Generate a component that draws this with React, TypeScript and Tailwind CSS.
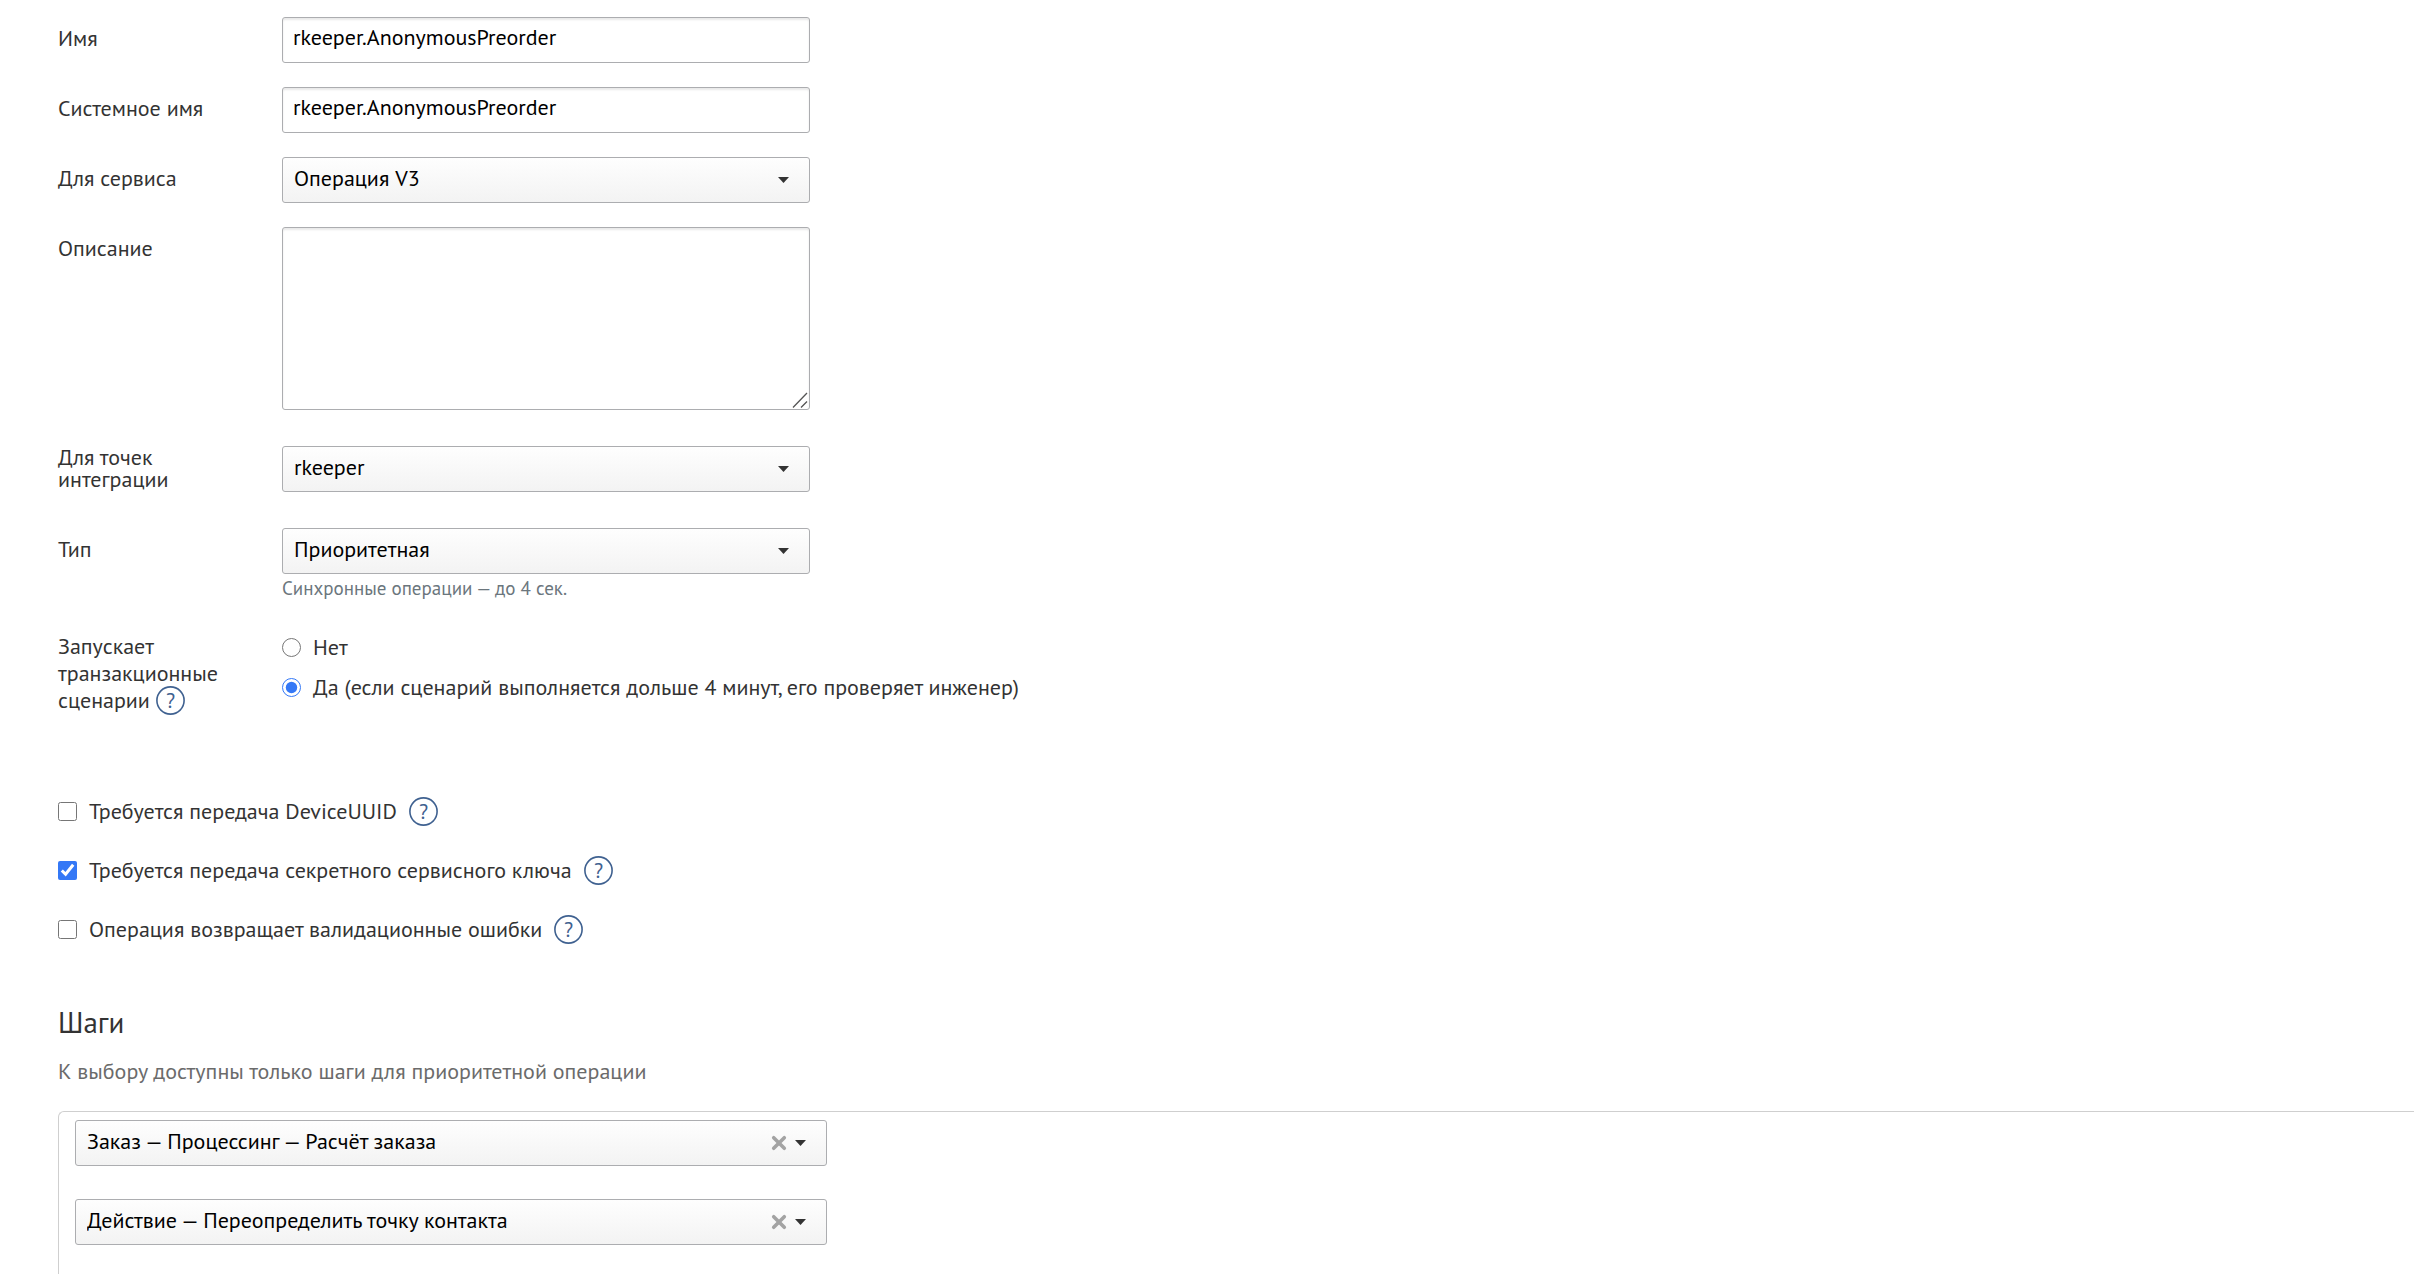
import { ReactNode, useState } from "react";

const fieldBorder = "border border-[#acadb0] rounded-[3px]";

function Row({ label, htmlFor, className = "", labelClass = "pt-[10px] leading-[22px]", children }: {
  label: ReactNode;
  htmlFor?: string;
  className?: string;
  labelClass?: string;
  children: ReactNode;
}) {
  return (
    <div className={`grid grid-cols-[224px_minmax(0,1fr)] ${className}`}>
      <label htmlFor={htmlFor} className={`pr-12 ${labelClass}`}>
        {label}
      </label>
      <div>{children}</div>
    </div>
  );
}

function TextInput({ id, defaultValue }: { id: string; defaultValue: string }) {
  return (
    <input
      id={id}
      type="text"
      defaultValue={defaultValue}
      className={`block h-[46px] w-full max-w-[528px] bg-white px-[10px] pb-[6px] text-black shadow-[inset_0_2px_2px_rgba(0,0,0,0.09)] outline-none ${fieldBorder}`}
    />
  );
}

function Select({ id, label, options, width = "max-w-[528px]", clearable = false }: {
  id: string;
  label?: string;
  options: string[];
  width?: string;
  clearable?: boolean;
}) {
  const [value, setValue] = useState(options[0]);

  return (
    <div className={`relative w-full ${width}`}>
      <select
        id={id}
        aria-label={label}
        value={value}
        onChange={(e) => setValue(e.target.value)}
        className={`block h-[46px] w-full appearance-none bg-linear-to-b from-[#fefefe] to-[#f3f3f3] pr-16 pb-1 pl-[11px] text-black outline-none ${fieldBorder}`}
      >
        {clearable && <option value=""></option>}
        {options.map((option) => (
          <option key={option}>{option}</option>
        ))}
      </select>
      <div className="pointer-events-none absolute inset-y-0 right-[21px] flex items-center gap-2">
        {clearable && (
          <button
            type="button"
            aria-label="Очистить"
            onClick={() => setValue("")}
            className="pointer-events-auto"
          >
            <svg width="16" height="16" viewBox="0 0 16 16" className="block">
              <path d="M2.7 2.7l10.6 10.6M13.3 2.7L2.7 13.3" stroke="#a3a3a3" strokeWidth="3.6" strokeLinecap="round" />
            </svg>
          </button>
        )}
        <svg width="11" height="6" viewBox="0 0 11 6">
          <path d="M0 0h11L5.5 6z" fill="#333" />
        </svg>
      </div>
    </div>
  );
}

function Help({ className = "" }: { className?: string }) {
  return (
    <button type="button" className={`size-[29px] shrink-0 ${className}`}>
      <svg width="29" height="29" viewBox="0 0 29 29" className="block">
        <circle cx="14.5" cy="14.5" r="13.6" fill="none" stroke="#3f6190" strokeWidth="1.6" />
        <text x="14.5" y="21.5" textAnchor="middle" fontSize="21" fill="#3f6190">
          ?
        </text>
      </svg>
    </button>
  );
}

function Radio({ label, defaultChecked }: { label: string; defaultChecked?: boolean }) {
  return (
    <label className="flex h-[30px] items-center gap-3">
      <input
        type="radio"
        name="transactional"
        defaultChecked={defaultChecked}
        className="size-[19px] shrink-0 accent-[#3478f6]"
      />
      {label}
    </label>
  );
}

const flags = [
  { id: "device-uuid", label: "Требуется передача DeviceUUID", checked: false },
  { id: "secret-key", label: "Требуется передача секретного сервисного ключа", checked: true },
  { id: "validation", label: "Операция возвращает валидационные ошибки", checked: false },
];

const steps = ["Заказ — Процессинг — Расчёт заказа", "Действие — Переопределить точку контакта"];

export default function App() {
  return (
    <form className="flex min-h-screen flex-col bg-white pt-[17px] pl-[58px] font-['PT_Sans','Noto_Sans',sans-serif] text-[22px] text-[#333]">
      <div className="space-y-6">
        <Row label="Имя" htmlFor="name">
          <TextInput id="name" defaultValue="rkeeper.AnonymousPreorder" />
        </Row>
        <Row label="Системное имя" htmlFor="system-name">
          <TextInput id="system-name" defaultValue="rkeeper.AnonymousPreorder" />
        </Row>
        <Row label="Для сервиса" htmlFor="service">
          <Select id="service" options={["Операция V3"]} />
        </Row>
        <Row label="Описание" htmlFor="description">
          <div className="relative w-full max-w-[528px]">
            <textarea
              id="description"
              className={`block h-[183px] w-full resize-none bg-white px-[10px] py-2 text-black shadow-[inset_0_2px_2px_rgba(0,0,0,0.09)] outline-none ${fieldBorder}`}
            />
            <svg width="16" height="16" viewBox="0 0 16 16" className="pointer-events-none absolute right-0.5 bottom-0.5">
              <path d="M1 15.5L15 1M9 15.5L15 9.5" stroke="#555" strokeWidth="1.3" />
            </svg>
          </div>
        </Row>
      </div>

      <Row label="Для точек интеграции" htmlFor="points" className="mt-9" labelClass="leading-[22px]">
        <Select id="points" options={["rkeeper"]} />
      </Row>

      <Row label="Тип" htmlFor="type" className="mt-9">
        <Select id="type" options={["Приоритетная"]} />
        <p className="mt-[2px] text-[19px] leading-6 text-[#6b767d]">Синхронные операции — до 4 сек.</p>
      </Row>

      <Row
        label={
          <>
            Запускает транзакционные сценарии <Help className="-mt-1.5 -mb-0.5 align-middle" />
          </>
        }
        className="mt-8"
        labelClass="pt-px leading-[27px]"
      >
        <div className="space-y-[10px]">
          <Radio label="Нет" />
          <Radio label="Да (если сценарий выполняется дольше 4 минут, его проверяет инженер)" defaultChecked />
        </div>
      </Row>

      {/* Flags */}
      <div className="mt-[83px] space-y-[30px]">
        {flags.map((flag) => (
          <div key={flag.id} className="flex h-[29px] items-center gap-3">
            <label className="flex items-center gap-3">
              <input
                type="checkbox"
                defaultChecked={flag.checked}
                className="size-[19px] shrink-0 accent-[#3478f6]"
              />
              {flag.label}
            </label>
            <Help />
          </div>
        ))}
      </div>

      {/* Steps */}
      <h2 className="mt-[60px] text-[29px] leading-9">Шаги</h2>
      <p className="mt-[17px] leading-7 text-[#6b6b6b]">К выбору доступны только шаги для приоритетной операции</p>
      <div className="mt-[26px] flex-1 space-y-[33px] rounded-tl-md border-t border-l border-[#cfcfcf] pt-2 pl-4">
        {steps.map((step, i) => (
          <Select key={step} id={`step-${i}`} label={`Шаг ${i + 1}`} options={[step]} width="max-w-[752px]" clearable />
        ))}
      </div>
    </form>
  );
}
